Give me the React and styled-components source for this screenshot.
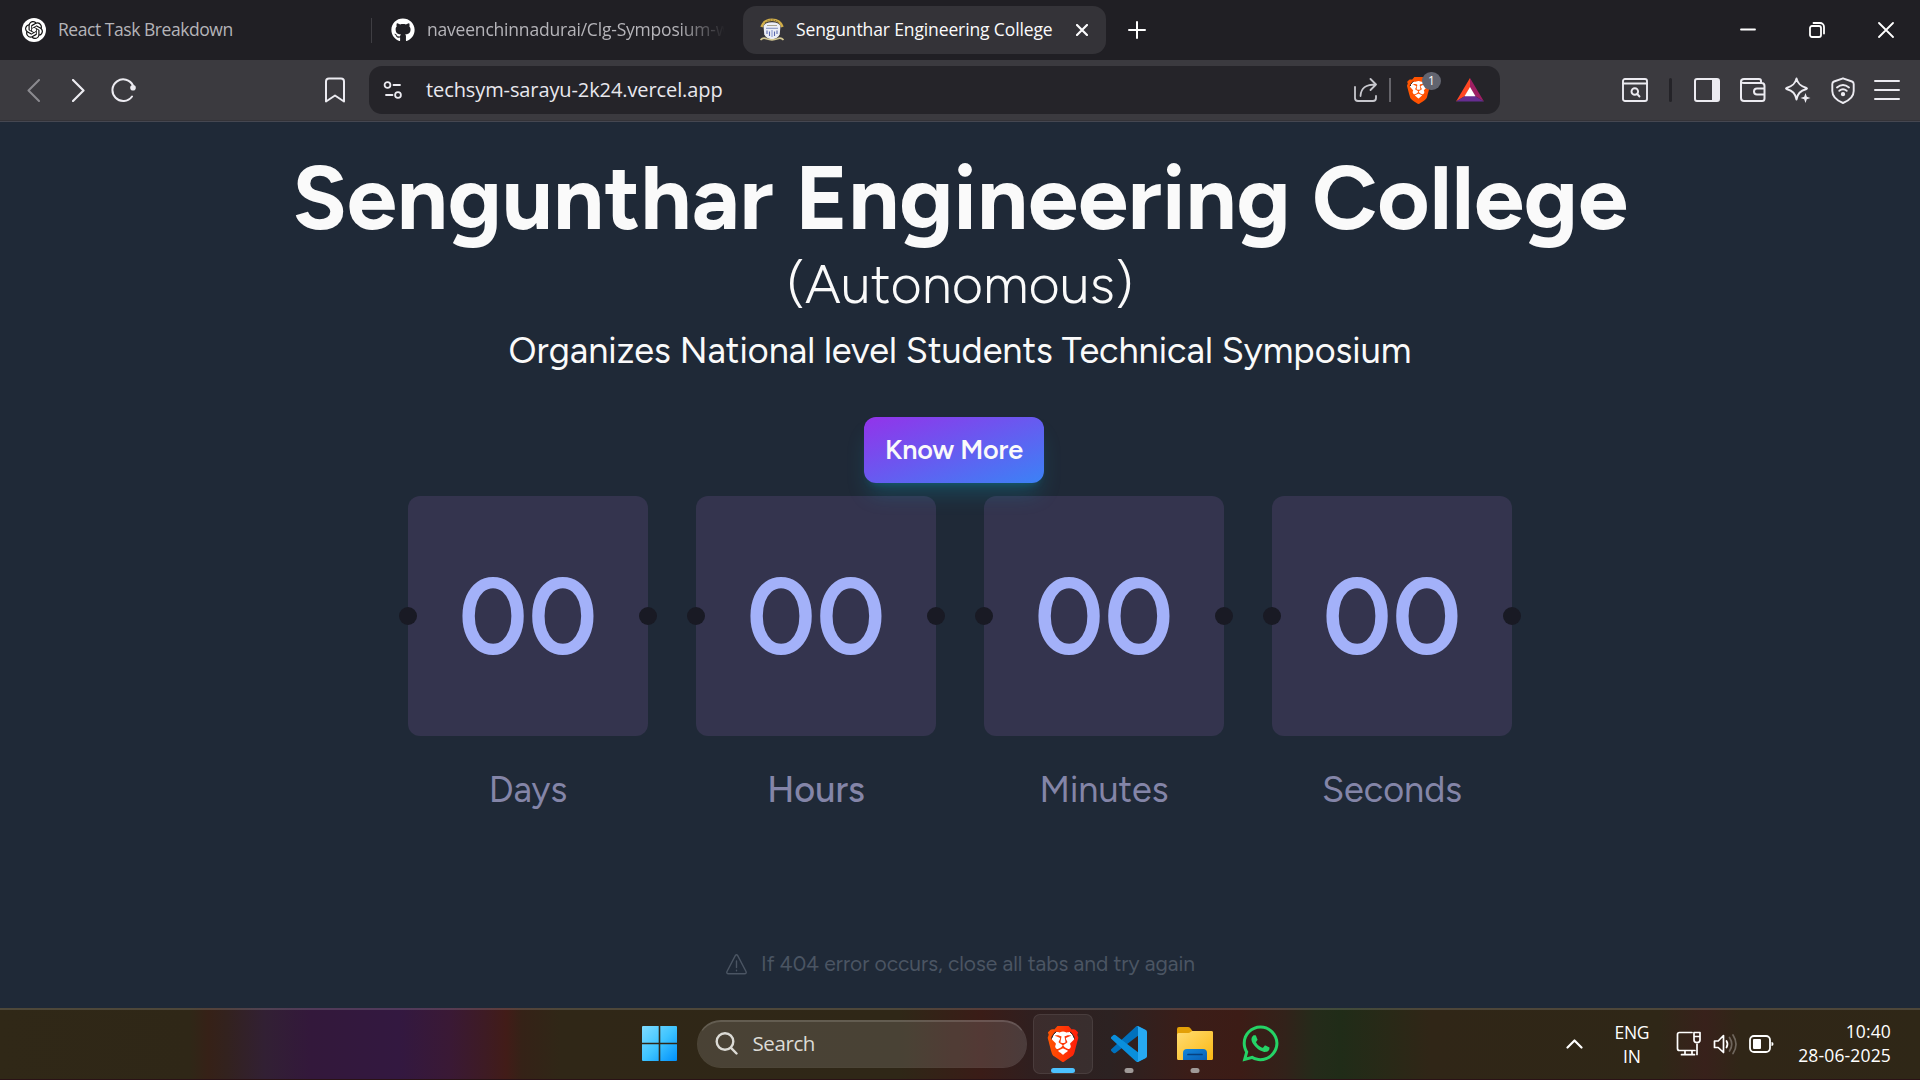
import React from 'react';
import styled, { createGlobalStyle } from 'styled-components';
import { SiOpenai, SiBrave } from 'react-icons/si';
import { FaGithub, FaWhatsapp } from 'react-icons/fa';

const UI_FONT = '"Segoe UI", "Open Sans", sans-serif';
const SITE_FONT = 'Figtree, Lato, sans-serif';

const GlobalStyle = createGlobalStyle`
  *, *::before, *::after { box-sizing: border-box; }
  body { margin: 0; background: #1f2937; overflow: hidden; }
  svg { display: block; flex: none; }
  h1, h2, p { margin: 0; font-weight: inherit; }
  button { font: inherit; border: 0; padding: 0; background: none; color: inherit; }
`;

const Screen = styled.div`
  width: 1920px;
  height: 1080px;
  display: flex;
  flex-direction: column;
  overflow: hidden;
`;

/* ---------- tab strip ---------- */
const TabStrip = styled.div`
  height: 60px;
  flex: none;
  display: flex;
  align-items: center;
  background: #201f24;
  color: #fff;
  font: 400 17.5px/24px ${UI_FONT};
`;

const Tab = styled.div`
  display: flex;
  align-items: center;
  height: 48px;
  width: ${(p) => p.$width}px;
  padding: 0 18px 0 ${(p) => p.$inset}px;
  gap: 12px;
  border-radius: 13px;
  background: ${(p) => (p.$active ? '#343338' : 'transparent')};
  color: ${(p) => (p.$active ? '#fbfbfc' : '#b5b4b9')};
`;

const TabTitle = styled.span`
  flex: 1;
  min-width: 0;
  overflow: hidden;
  white-space: nowrap;
  padding-bottom: 2px;
  letter-spacing: ${(p) => p.$spacing || 0}px;
  mask-image: ${(p) => (p.$fade ? 'linear-gradient(90deg, #000 84%, transparent 100%)' : 'none')};
`;

const Favicon = styled.span`
  width: 24px;
  height: 24px;
  flex: none;
  display: grid;
  place-items: center;
  border-radius: 50%;
  background: ${(p) => p.$bg || 'transparent'};
  color: ${(p) => p.$color || '#fff'};
`;

const TabDivider = styled.span`
  width: 1px;
  height: 25px;
  background: #3f3e43;
`;

const IconButton = styled.button`
  display: grid;
  place-items: center;
  width: ${(p) => p.$w}px;
  height: ${(p) => p.$h || 48}px;
  flex: none;
  opacity: ${(p) => (p.$dim ? 0.45 : 1)};
`;

const Spacer = styled.div`
  flex: 1;
`;

/* ---------- toolbar ---------- */
const Toolbar = styled.div`
  height: 62px;
  flex: none;
  display: flex;
  align-items: center;
  padding-bottom: 1px;
  background: #3b3a3f;
  border-bottom: 1px solid #454751;
  box-shadow: inset 0 -1px 0 #343338;
  color: #ecebf1;
`;

const NavGroup = styled.div`
  width: 369px;
  display: flex;
  align-items: center;
  padding-left: 11px;
`;

const AddressBar = styled.div`
  width: 1131px;
  height: 48px;
  display: flex;
  align-items: center;
  padding: 0 16px 0 14px;
  border-radius: 13px;
  background: #252429;
`;

const Url = styled.span`
  flex: 1;
  padding-left: 23px;
  font: 400 20px/28px ${UI_FONT};
  letter-spacing: -0.1px;
  color: #e9e8ee;
`;

const AddressRule = styled.span`
  width: 2px;
  height: 24px;
  margin: 0 16px 0 11px;
  background: #65646a;
`;

const ShieldSlot = styled.span`
  position: relative;
  width: 34px;
  height: 30px;
  display: flex;
  align-items: center;
  margin: 0 15px 0 0;
`;

const ShieldCount = styled.span`
  position: absolute;
  top: -3px;
  right: 0;
  width: 19px;
  height: 18px;
  border-radius: 9px;
  background: #62646f;
  color: #fff;
  font: 400 12px/18px ${UI_FONT};
  text-align: center;
`;

const BraveMark = styled.span`
  display: grid;
  place-items: center;
  width: ${(p) => p.$size}px;
  height: ${(p) => p.$size}px;
  margin-left: ${(p) => p.$shift || 0}px;
  background: radial-gradient(ellipse 32% 36% at 50% 46%, #fff 98%, transparent 100%);
  color: #fb4f14;
`;

const ToolGroup = styled.div`
  flex: 1;
  display: flex;
  align-items: center;
  justify-content: flex-end;
  gap: 19.5px;
  padding-right: 20px;
`;

const ToolRule = styled.span`
  width: 3px;
  height: 24px;
  margin: 0 3px 0 1px;
  border-radius: 2px;
  background: #242328;
`;

/* ---------- page ---------- */
const Page = styled.main`
  flex: 1;
  min-height: 0;
  display: flex;
  flex-direction: column;
  align-items: center;
  padding: 31px 0 29px;
  background: #1f2937;
  color: #fafafa;
  font-family: ${SITE_FONT};
  white-space: nowrap;
`;

const Heading = styled.h1`
  font-size: 90px;
  font-weight: 700;
  line-height: 90px;
`;

const Status = styled.p`
  margin-top: 12px;
  font-size: 54px;
  font-weight: 300;
  line-height: 60px;
`;

const Tagline = styled.h2`
  margin-top: 9px;
  font-size: 36px;
  font-weight: 400;
  line-height: 54px;
`;

const KnowMore = styled.button`
  position: relative;
  z-index: 1;
  width: 180px;
  height: 66px;
  margin: 39px 12px 13px 0;
  border-radius: 12px;
  background: linear-gradient(to bottom right, #9333ea, #3b82f6);
  box-shadow: 0 15px 22px -5px rgba(6, 182, 212, 0.22), 0 6px 9px -6px rgba(6, 182, 212, 0.3);
  color: #fafafa;
  font: 600 27px/36px ${SITE_FONT};
  letter-spacing: -0.2px;
`;

const Countdown = styled.div`
  display: flex;
  gap: 48px;
`;

const Unit = styled.div`
  width: 240px;
  display: flex;
  flex-direction: column;
  align-items: center;
`;

const UnitBox = styled.div`
  position: relative;
  width: 240px;
  height: 240px;
  display: grid;
  place-items: center;
  border-radius: 12px;
  background: #34344e;
  color: #a3b1f9;
  font: 600 108px/120px ${SITE_FONT};

  &::before, &::after {
    content: '';
    position: absolute;
    top: 111px;
    width: 18px;
    height: 18px;
    border-radius: 50%;
    background: #191a24;
  }
  &::before { left: -9px; }
  &::after { right: -9px; }
`;

const UnitLabel = styled.span`
  margin-top: 27px;
  font-size: 36px;
  font-weight: ${(p) => (p.$strong ? 500 : 400)};
  line-height: 54px;
  color: #8485a8;
`;

const Notice = styled.p`
  margin-top: auto;
  display: flex;
  align-items: center;
  gap: 14px;
  padding-left: 1px;
  font-size: 21px;
  line-height: 30px;
  color: #4b5563;
`;

/* ---------- taskbar ---------- */
const Taskbar = styled.footer`
  height: 72px;
  flex: none;
  display: grid;
  grid-template-columns: 1fr auto 1fr;
  align-items: center;
  border-top: 2px solid rgba(255, 255, 255, 0.15);
  border-bottom: 1px solid #2a1216;
  background: linear-gradient(90deg,
    #302817 0, #2f2717 190px, #362117 208px, #33221e 226px, #322034 265px,
    #33183b 310px, #331840 400px, #3a1935 450px, #3e1b24 485px, #421c18 506px,
    #352217 522px, #302717 560px, #2f2717 900px, #3a1c17 981px, #301f1f 1030px,
    #2c2222 1110px, #3b1d18 1190px, #3c1c16 1240px, #32221a 1285px,
    #242b1a 1315px, #202c18 1340px, #292917 1390px, #302617 1430px,
    #2f2717 1660px, #38211b 1705px, #302617 1740px, #2f2717 1920px);
  background-origin: border-box;
  color: #fff;
  font-family: ${UI_FONT};
`;

const Dock = styled.div`
  grid-column: 2;
  display: flex;
  align-items: center;
  padding: 0 0 2px 18px;
`;

const SearchBox = styled.div`
  width: 330px;
  height: 48px;
  margin: 0 6px 0 20px;
  padding: 0 0 2px 17px;
  display: flex;
  align-items: center;
  gap: 15px;
  border-radius: 24px;
  border: 1px solid rgba(255, 255, 255, 0.14);
  border-top: 2px solid rgba(255, 255, 255, 0.25);
  background: rgba(255, 255, 255, 0.13);
  background-clip: padding-box;
  font-size: 20.5px;
  line-height: 28px;
  letter-spacing: -0.4px;
  color: #dcdbd6;
`;

const DockItem = styled.div`
  position: relative;
  width: 60px;
  height: 60px;
  margin-right: 6px;
  display: grid;
  place-items: center;
  border-radius: 7px;
  border: 1px solid ${(p) => (p.$active ? 'rgba(255,255,255,0.08)' : 'transparent')};
  background: ${(p) => (p.$active ? 'rgba(255,255,255,0.06)' : 'transparent')};
  color: ${(p) => p.$color || 'inherit'};
`;

const RunMark = styled.span`
  position: absolute;
  bottom: 0;
  left: 50%;
  width: ${(p) => (p.$active ? 24 : 9)}px;
  height: 5px;
  border-radius: 3px;
  transform: translateX(-50%);
  background: ${(p) => (p.$active ? '#4cc2ff' : '#a09a98')};
`;

const Tray = styled.div`
  grid-column: 3;
  display: flex;
  align-items: center;
  justify-content: flex-end;
  padding: 0 29px 2px 0;
  font-size: 17.5px;
  line-height: 24px;
`;

const TrayText = styled.div`
  display: flex;
  flex-direction: column;
  text-align: ${(p) => p.$align};
  letter-spacing: ${(p) => p.$spacing}px;
  margin-left: ${(p) => p.$before}px;
  margin-top: ${(p) => p.$drop || 0}px;
`;

const TrayIcons = styled.div`
  display: flex;
  align-items: center;
  gap: 11.5px;
  margin-left: 27px;
`;

/* ---------- drawings ---------- */
const Line = ({ w = 24, h = 24, vb, sw = 2, children }) => (
  <svg width={w} height={h} viewBox={vb || `0 0 ${w} ${h}`} fill="none" stroke="currentColor" strokeWidth={sw} strokeLinecap="round" strokeLinejoin="round">
    {children}
  </svg>
);

const Crest = () => (
  <svg width="24" height="24" viewBox="0 0 24 24">
    <path d="M1.500 9C3 4.500 7 1.800 12 1.800s9 2.700 10.500 7.200" fill="none" stroke="#d0ad48" strokeWidth="2.600" />
    <path d="M5 5C7 2.700 9.500 2 12 2s5 .7 7 3" fill="none" stroke="#6b5a35" strokeWidth=".8" strokeDasharray="1.500 1.200" />
    <path d="M3.500 8Q5 4.500 12 4.300 19 4.500 20.500 8l-.8 8.500Q18 20.500 12 21.500 6 20.500 4.300 16.500Z" fill="#eceef6" />
    <path d="M7 7.500h10" stroke="#aaa58f" strokeWidth="1" />
    <path d="M6 10.300h12" stroke="#8894c0" strokeWidth="1.100" />
    <path d="M7 12.500v3.500M9.500 13.500v4.500M14.500 13.500v4.500M17 12.500v3.500" stroke="#5a68ad" strokeWidth="1.100" />
    <path d="M12 12v7" stroke="#a9b3dc" strokeWidth="1.600" />
    <path d="M.5 22Q3 19 6.500 20.800q5.500 2.200 11 0 3.500-1.800 6 1.200" fill="none" stroke="#d3c793" strokeWidth="1.600" />
  </svg>
);

const Brave = ({ size, id, shift }) => (
  <BraveMark $size={size} $shift={shift}>
    <svg width={size} height={size} viewBox="0 0 24 24">
      <defs>
        <linearGradient id={id} x1="0" y1="0" x2="1" y2="0">
          <stop offset="0" stopColor="#ff5601" />
          <stop offset="1" stopColor={size > 30 ? '#ff1b0a' : '#ff4d00'} />
        </linearGradient>
      </defs>
      <SiBrave size={24} fill={`url(#${id})`} />
    </svg>
  </BraveMark>
);

const BatTriangle = () => (
  <svg width="28" height="24" viewBox="0 0 28 24">
    <path d="M14 0 0 23.500l9-5.500 5-8.500Z" fill="#ff4724" />
    <path d="m14 0 14 23.500-9-5.500-5-8.500Z" fill="#9e1f63" />
    <path d="M0 23.500h28L19 18H9Z" fill="#662d91" />
    <path d="m14 9 5.500 9.300h-11Z" fill="#fff" />
  </svg>
);

const WindowsLogo = () => (
  <svg width="35" height="35" viewBox="0 0 35 35">
    <defs>
      <linearGradient id="win" x1="0" y1="0" x2="1" y2="1">
        <stop offset="0" stopColor="#7fdcff" />
        <stop offset=".5" stopColor="#3fc4ff" />
        <stop offset="1" stopColor="#0090fb" />
      </linearGradient>
    </defs>
    <path fill="url(#win)" d="M1 0h15.700v16.700H0V1Q0 0 1 0ZM18.300 0H34q1 0 1 1v15.700H18.300ZM0 18.300h16.700V35H1q-1 0-1-1ZM18.300 18.300H35V34q0 1-1 1H18.300Z" />
  </svg>
);

const VsCode = () => (
  <svg width="36" height="36" viewBox="0 0 100 100">
    <path fill="#0071bd" d="M96.500 10.800 75.900.9a6.200 6.200 0 0 0-7.100 1.200L1.400 63.600a4.200 4.200 0 0 0 0 6.200l5.500 5a4.200 4.200 0 0 0 5.300.2L75 27.300Z" />
    <path fill="#0a8fdc" d="m96.500 89.200-20.600 9.900a6.200 6.200 0 0 1-7.100-1.200L1.400 36.400a4.200 4.200 0 0 1 0-6.200l5.500-5a4.200 4.200 0 0 1 5.300-.2L75 72.700Z" />
    <path fill="#27a9f2" d="M75.900 99.100a6.200 6.200 0 0 1-7.100-1.200c2.300 2.300 6.200.7 6.200-2.600V4.700c0-3.300-3.900-4.900-6.200-2.600A6.200 6.200 0 0 1 75.900.9l20.600 9.900c2.100 1 3.500 3.200 3.500 5.600v67.200c0 2.400-1.400 4.600-3.500 5.600Z" />
  </svg>
);

const Explorer = () => (
  <svg width="36" height="34" viewBox="0 0 36 34">
    <defs>
      <linearGradient id="fold" x1="0" y1="0" x2="1" y2="1">
        <stop offset="0" stopColor="#ffdc72" />
        <stop offset="1" stopColor="#fcb813" />
      </linearGradient>
      <linearGradient id="tray" x1="0" y1="0" x2="1" y2="1">
        <stop offset="0" stopColor="#1287dd" />
        <stop offset="1" stopColor="#0a5fb4" />
      </linearGradient>
    </defs>
    <path d="M0 2Q0 0 2 0h9q1.200 0 2 .8L15.500 4H34q2 0 2 2v6H0Z" fill="#e3a007" />
    <path d="M0 7.500Q0 6 1.500 6h10q1 0 1.800-.8L15 4h19.500Q36 4 36 5.500V31.500Q36 33 34.500 33h-33Q0 33 0 31.500Z" fill="url(#fold)" />
    <path d="M6 33V26q0-4 4-4h16q4 0 4 4v7Z" fill="url(#tray)" />
    <path d="M11 27.500h14" stroke="#06407f" strokeWidth="1.700" strokeLinecap="round" />
  </svg>
);

const UNITS = [
  { label: 'Days', value: '00' },
  { label: 'Hours', value: '00', strong: true },
  { label: 'Minutes', value: '00' },
  { label: 'Seconds', value: '00' },
];

export default function App() {
  return (
    <Screen>
      <GlobalStyle />
      <TabStrip>
        <Tab $width={371} $inset={22}>
          <Favicon $bg="#fff" $color="#111"><SiOpenai size={18} /></Favicon>
          <TabTitle $spacing={-0.45}>React Task Breakdown</TabTitle>
        </Tab>
        <TabDivider />
        <Tab $width={370.500} $inset={19}>
          <Favicon><FaGithub size={24} /></Favicon>
          <TabTitle $fade $spacing={-0.2}>naveenchinnadurai/Clg-Symposium-w</TabTitle>
        </Tab>
        <Tab $active $width={363} $inset={17.500}>
          <Favicon><Crest /></Favicon>
          <TabTitle $spacing={-0.12}>Sengunthar Engineering College</TabTitle>
          <Line w={12} h={12} sw={2.200}><path d="m1 1 10 10M11 1 1 11" /></Line>
        </Tab>
        <IconButton $w={63}>
          <Line w={18} h={18}><path d="M9 1v16M1 9h16" /></Line>
        </IconButton>
        <Spacer />
        <IconButton $w={69}><Line w={16} h={16} sw={1.800}><path d="M1 7.500h14" /></Line></IconButton>
        <IconButton $w={69}>
          <Line w={16} h={16} sw={1.800}>
            <rect x="1" y="4" width="11" height="11" rx="2" />
            <path d="M4.500 1h6.500a4 4 0 0 1 4 4v6.500" />
          </Line>
        </IconButton>
        <IconButton $w={69}><Line w={16} h={16} sw={1.800}><path d="m1 1 14 14M15 1 1 15" /></Line></IconButton>
      </TabStrip>

      <Toolbar>
        <NavGroup>
          <IconButton $w={44} $dim><Line w={13} h={23}><path d="M12 1 1.500 11.500 12 22" /></Line></IconButton>
          <IconButton $w={46}><Line w={13} h={23} sw={2.200}><path d="m1 1 10.500 10.500L1 22" /></Line></IconButton>
          <IconButton $w={43}>
            <Line w={26} h={24}>
              <path d="M22 18.500A10.800 10.800 0 1 1 23 7.500" />
              <circle cx="23" cy="9.800" r="2.800" fill="currentColor" stroke="none" />
            </Line>
          </IconButton>
          <Spacer />
          <IconButton $w={68}>
            <Line w={20} h={26}><path d="M4 1.500h12q3 0 3 3V24.500l-9-6-9 6v-20q0-3 3-3Z" /></Line>
          </IconButton>
        </NavGroup>
        <AddressBar>
          <Line w={20} h={18} sw={1.800}>
            <circle cx="4.500" cy="4" r="2.900" /><path d="M10.500 4H17M3 14h6.500" /><circle cx="15" cy="14" r="2.900" />
          </Line>
          <Url>techsym-sarayu-2k24.vercel.app</Url>
          <Line w={24} h={24} sw={1.800}>
            <path d="M1 9v11q0 3 3 3h15q3 0 3-3v-2M6.500 18C7 9.500 12 6.500 22 6.500M16.500 1l5.500 5.500-5.500 5.500" opacity=".82" />
          </Line>
          <AddressRule />
          <ShieldSlot>
            <Brave size={27} id="braveBar" shift={-2} />
            <ShieldCount>1</ShieldCount>
          </ShieldSlot>
          <BatTriangle />
        </AddressBar>
        <ToolGroup>
          <Line w={26} h={24} sw={1.900}>
            <rect x="1" y="1" width="24" height="22" rx="2" /><path d="M1 5.500h24" />
            <circle cx="12.800" cy="13.500" r="3.300" /><path d="m15.200 16 2.300 2.500" />
          </Line>
          <ToolRule />
          <Line w={26} h={24}>
            <rect x="1" y="1" width="24" height="22" rx="2" /><path d="M19 2h5v20h-5Z" fill="currentColor" />
          </Line>
          <Line w={26} h={24}>
            <path d="M21 5V3q0-2-2-2H4Q1 1 1 3.500V20q0 3 3 3h18q2.500 0 2.500-2.500V8q0-3-3-3H4Q1 5 1 3.500M24.500 10.500H17q-3 0-3 3t3 3h7.500" />
          </Line>
          <Line w={26} h={26} sw={1.900}>
            <path d="M11.500 1.500c1.200 5 3.500 7.500 10 9.500q1 .5 0 1C15 14 12.700 16.500 11.500 22.500 10.300 16.500 8 14 1.500 12q-1-.5 0-1C8 9 10.300 6.500 11.500 1.500Z" />
            <path d="m20.500 16 1.300 3.700 3.700 1.300-3.700 1.300-1.300 3.700-1.300-3.700L15.500 21l3.700-1.300Z" fill="currentColor" stroke="none" />
          </Line>
          <Line w={24} h={27} sw={1.900}>
            <path d="M12 1.300 21 4.500q1.700.7 1.700 2.500v7c0 6-4.500 9.500-10.700 12C5.800 23.500 1.300 20 1.300 14V7q0-1.800 1.700-2.500Z" />
            <path d="M6 10.500q6-5 12 0M8.300 13.800q3.700-3 7.400 0" /><circle cx="12" cy="17.200" r="1.200" fill="currentColor" />
          </Line>
          <Line w={26} h={20}><path d="M1 1h24M1 10h24M1 19h24" /></Line>
        </ToolGroup>
      </Toolbar>

      <Page>
        <Heading>Sengunthar Engineering College</Heading>
        <Status>(Autonomous)</Status>
        <Tagline>Organizes National level Students Technical Symposium</Tagline>
        <KnowMore>Know More</KnowMore>
        <Countdown>
          {UNITS.map((u) => (
            <Unit key={u.label}>
              <UnitBox>{u.value}</UnitBox>
              <UnitLabel $strong={u.strong}>{u.label}</UnitLabel>
            </Unit>
          ))}
        </Countdown>
        <Notice>
          <Line w={21} h={21} sw={1.400}>
            <path d="M9.300 1.600 1 17.500q-.8 2.200 1.500 2.200h16q2.300 0 1.500-2.200L11.700 1.600q-1.200-1.600-2.400 0ZM10.500 7v6.500M10.500 16.300v.4" />
          </Line>
          If 404 error occurs, close all tabs and try again
        </Notice>
      </Page>

      <Taskbar>
        <Dock>
          <WindowsLogo />
          <SearchBox>
            <Line w={23} h={23} sw={2.400}><circle cx="10" cy="9.500" r="8.300" /><path d="m16 15.800 5.500 5.700" /></Line>
            Search
          </SearchBox>
          <DockItem $active><Brave size={36} id="braveDock" /><RunMark $active /></DockItem>
          <DockItem><VsCode /><RunMark /></DockItem>
          <DockItem><Explorer /><RunMark /></DockItem>
          <DockItem $color="#25d366"><FaWhatsapp size={41} /></DockItem>
        </Dock>
        <Tray>
          <Line w={17} h={10} sw={2.200}><path d="m1.500 8.500 7-7 7 7" /></Line>
          <TrayText $align="center" $spacing={-0.3} $before={31}>
            <span>ENG</span><span>IN</span>
          </TrayText>
          <TrayIcons>
            <Line w={25} h={25} sw={1.700}>
              <path d="M16 1.500H3.500Q1.500 1.500 1.500 3.500v14q0 2 2 2H19M9 19.500v4M16 19.500v4M5.500 23.700h13M21 13v10.500" />
              <path d="M18 1.500h6V9q0 2.500-3 2.500T18 9ZM18 5.500h6" />
            </Line>
            <Line w={25} h={22} sw={1.700}>
              <path d="M1.500 8v6.500h3.700L10.500 19.500v-17L5.200 8Z" /><path d="M13.500 8q2 3 0 6.500" />
              <path d="M16.500 4.500q4.500 6.700 0 13.500M20 2q6 9.300 0 18.500" opacity=".3" />
            </Line>
            <Line w={25} h={18} sw={1.800}>
              <rect x="1" y="1" width="20" height="16" rx="4" /><rect x="4" y="4" width="8" height="10" rx="1" fill="currentColor" stroke="none" />
              <path d="M22.500 7q2 0 2 2t-2 2Z" fill="currentColor" stroke="none" />
            </Line>
          </TrayIcons>
          <TrayText $align="right" $spacing={0.15} $before={24} $drop={-1}>
            <span>10:40</span><span>28-06-2025</span>
          </TrayText>
        </Tray>
      </Taskbar>
    </Screen>
  );
}
